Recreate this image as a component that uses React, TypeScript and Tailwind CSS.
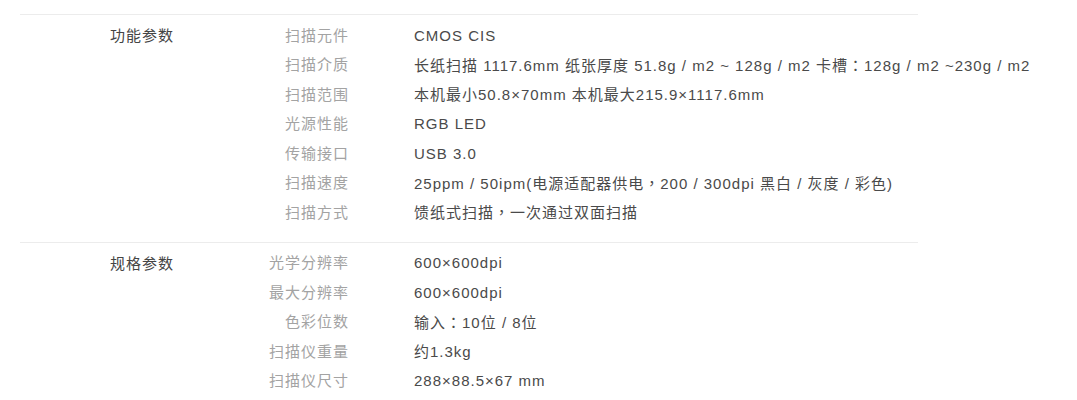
type Spec = { label: string; value: string };

type Section = { title: string; rows: Spec[] };

const sections: Section[] = [
  {
    title: "功能参数",
    rows: [
      { label: "扫描元件", value: "CMOS CIS" },
      {
        label: "扫描介质",
        value: "长纸扫描 1117.6mm 纸张厚度 51.8g / m2 ~ 128g / m2 卡槽：128g / m2 ~230g / m2",
      },
      { label: "扫描范围", value: "本机最小50.8×70mm 本机最大215.9×1117.6mm" },
      { label: "光源性能", value: "RGB LED" },
      { label: "传输接口", value: "USB 3.0" },
      { label: "扫描速度", value: "25ppm / 50ipm(电源适配器供电，200 / 300dpi 黑白 / 灰度 / 彩色)" },
      { label: "扫描方式", value: "馈纸式扫描，一次通过双面扫描" },
    ],
  },
  {
    title: "规格参数",
    rows: [
      { label: "光学分辨率", value: "600×600dpi" },
      { label: "最大分辨率", value: "600×600dpi" },
      { label: "色彩位数", value: "输入：10位 / 8位" },
      { label: "扫描仪重量", value: "约1.3kg" },
      { label: "扫描仪尺寸", value: "288×88.5×67 mm" },
    ],
  },
];

// full-width punctuation sits centred in the screenshot, like the TC glyphs
const Value = ({ text }: { text: string }) => {
  const parts = text.split(/([：，])/);
  return (
    <>
      {parts.map((p, i) =>
        p === "：" || p === "，" ? (
          <span key={i} style={{ fontFamily: '"Noto Sans CJK TC", sans-serif' }}>
            {p}
          </span>
        ) : (
          <span key={i}>{p}</span>
        )
      )}
    </>
  );
};

const SpecSection = ({ section }: { section: Section }) => {
  return (
    <div className="flex border-t border-[#ececec] pt-[6px] pb-[14px]">
      <div className="w-[180px] shrink-0 pl-[90px] leading-[29.5px] text-[#444]">{section.title}</div>
      <div className="flex flex-col">
        {section.rows.map((row) => (
          <div key={row.label} className="flex h-[29.5px] items-center whitespace-nowrap">
            <div className="w-[149px] shrink-0 text-right text-[#a3a3a3]">{row.label}</div>
            <div className="ml-[65px] text-[#4a4a4a]">
              <Value text={row.value} />
            </div>
          </div>
        ))}
      </div>
    </div>
  );
};

export default function App() {
  return (
    <div
      className="h-[400px] w-[1077px] overflow-hidden bg-white text-[15px] tracking-[1px]"
      style={{ fontFamily: '"Liberation Sans", Arial, "Noto Sans CJK SC", sans-serif' }}
    >
      <div className="ml-[20px] mt-[14px] w-[898px]">
        {sections.map((s) => (
          <SpecSection key={s.title} section={s} />
        ))}
      </div>
    </div>
  );
}
